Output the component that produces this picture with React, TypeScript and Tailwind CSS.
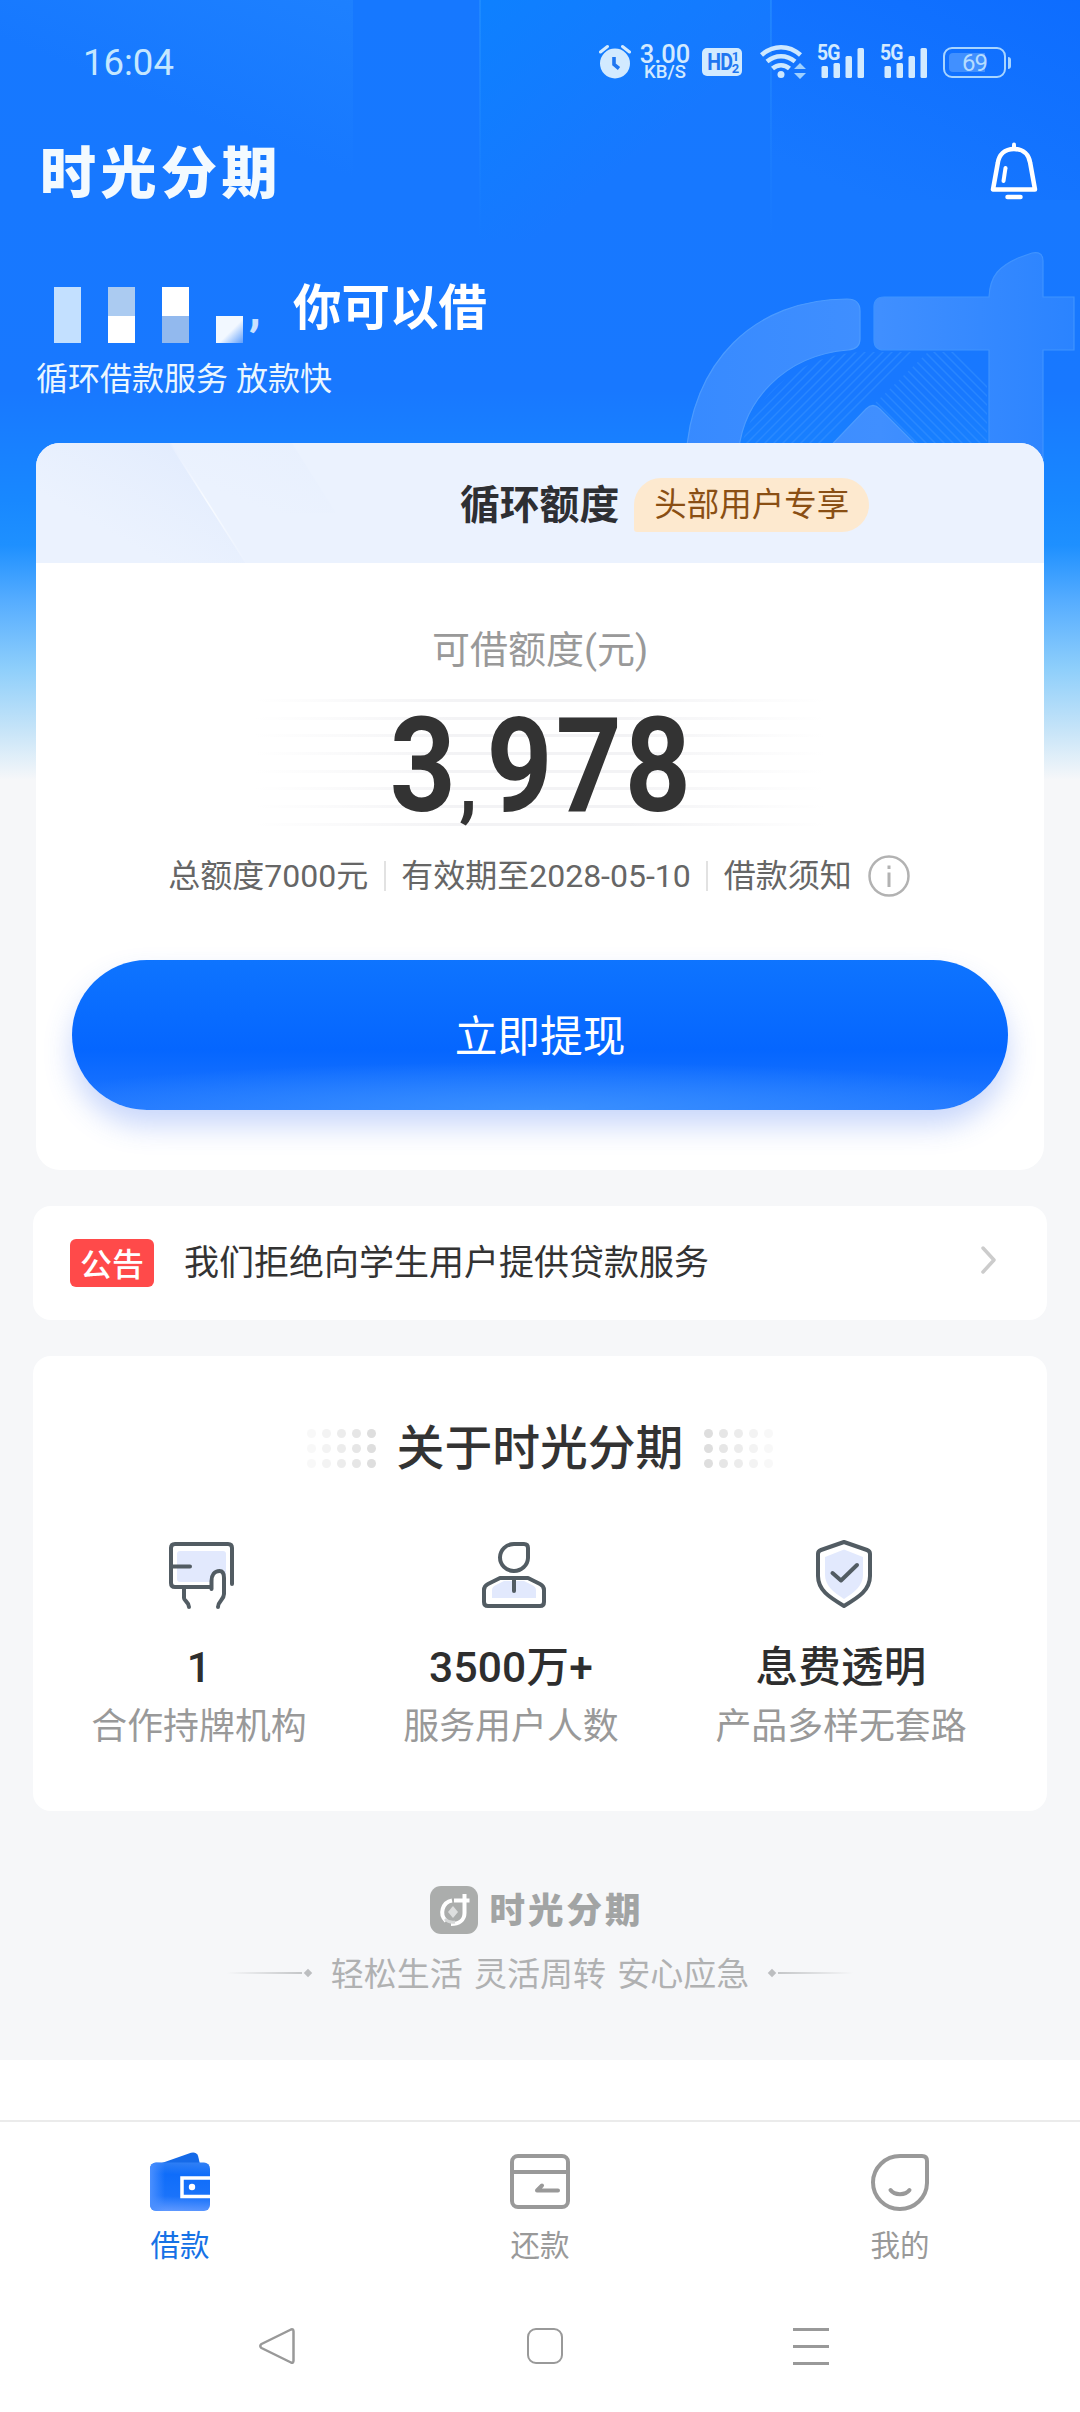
import React from 'react';

const DIGIT_STRIPES = [0, 1, 2, 3, 4, 5, 6, 7];
const DOT_OPACITY = [0.2, 0.35, 0.55, 0.75, 1];

function AlarmIcon() {
  return (
    <svg width="32" height="36" viewBox="0 0 32 36" fill="none">
      <circle cx="16" cy="19.5" r="15" fill="#d2eaff" />
      <path d="M1.500 8 8.500 2.500M30.500 8 23.500 2.500" stroke="#d2eaff" strokeWidth="3" strokeLinecap="round" />
      <path d="M15 13v7.500l5 4" stroke="#1f76f0" strokeWidth="3.600" />
    </svg>
  );
}

function WifiIcon() {
  return (
    <svg width="46" height="36" viewBox="0 0 46 36" fill="none">
      <g stroke="#cde8ff" strokeWidth="4.500">
        <path d="M1.500 11C13 .500 29 .500 40.500 11" />
        <path d="M7 17.500c8.500-7 19.500-7 28 0" />
        <path d="M12.500 24.500c5-4.500 12-4.500 17 0" />
      </g>
      <circle cx="21" cy="30.500" r="3.500" fill="#cde8ff" />
      <path d="M34 25h12l-6-6zM34 29h12l-6 6z" fill="#9fd0ff" />
    </svg>
  );
}

function Signal() {
  return (
    <div className="relative h-[34px] w-[47px]">
      <span className="absolute -top-px left-[-1px] origin-left scale-x-[0.9] font-['Roboto',sans-serif] text-[21.500px] leading-[18px] font-bold tracking-[-1px] text-[#d2eaff]">
        5G
      </span>
      <svg className="absolute inset-0" width="47" height="34" viewBox="0 0 47 34" fill="#d2eaff">
        <rect x="3.500" y="21" width="6.500" height="12" rx="1.500" />
        <rect x="15.500" y="18" width="6.500" height="15" rx="1.500" />
        <rect x="27.500" y="11" width="6.500" height="22" rx="1.500" />
        <rect x="39.500" y="3" width="6.500" height="30" rx="1.500" />
      </svg>
    </div>
  );
}

function StatusBar() {
  return (
    <div className="flex h-[124px] items-center pl-[83px]">
      <span className="w-[516px] pt-[2px] text-[36.500px] text-[#c4e7ff]">16:04</span>
      <div className="flex items-center">
        <AlarmIcon />
        <div className="ml-[8px] flex w-[52px] flex-col items-center pt-px font-medium text-[#d2eaff]">
          <span className="text-[25.500px] leading-[20px]">3.00</span>
          <span className="text-[18.500px] leading-[17px]">KB/S</span>
        </div>
        <div className="ml-[11px] flex h-[28px] w-[40px] items-center justify-center rounded-[5px] bg-[#d2eaff] pt-px text-[#1f76f0]">
          <span className="origin-center scale-x-[0.85] text-[23px] leading-[24px] font-bold tracking-[-1px]">HD</span>
          <span className="-ml-[2px] flex flex-col text-[13px] leading-[12px] font-bold">
            <span>1</span>
            <span>2</span>
          </span>
        </div>
        <div className="ml-[18px]">
          <WifiIcon />
        </div>
        <div className="ml-[12px] flex gap-4">
          <Signal />
          <Signal />
        </div>
        <div className="ml-[15px] flex items-center gap-[2px] pt-px">
          <div className="flex h-[31px] w-[63px] items-center rounded-[9px] border-[2.500px] border-[#a8d5ff] p-[4px]">
            <div className="flex h-full w-[36px] items-center justify-end rounded-l-[4px] bg-[#4190ff]">
              <span className="-mr-[2px] text-[24px] leading-none tracking-[-1px] text-[#b5dcff]">69</span>
            </div>
          </div>
          <div className="h-[12px] w-[3px] rounded-r bg-[#a8d5ff]" />
        </div>
      </div>
    </div>
  );
}

function BellIcon() {
  return (
    <svg width="48" height="58" viewBox="0 0 48 58" fill="none" stroke="#fff" strokeLinecap="round" strokeLinejoin="round">
      <path d="M24 2.500V6" strokeWidth="4" />
      <path d="M24 7C14.500 7 9 13 7.800 21L3 47.500h42L40.200 21C39 13 33.500 7 24 7Z" strokeWidth="4.500" />
      <path d="M15.500 26 13.500 39" strokeWidth="4" />
      <path d="M17.500 55h13" strokeWidth="4.500" />
    </svg>
  );
}

function HeroArt() {
  return (
    <svg className="absolute top-0 left-0" width="1080" height="470" viewBox="0 0 1080 470" fill="none">
      <defs>
        <linearGradient id="beam" x1="0" y1="0" x2="0" y2="1">
          <stop offset="0" stopColor="#38a0ff" stopOpacity="0.350" />
          <stop offset="1" stopColor="#38a0ff" stopOpacity="0" />
        </linearGradient>
        <linearGradient id="beamSide" x1="0.300" y1="1" x2="1" y2="0">
          <stop offset="0.400" stopColor="#2b90ff" stopOpacity="0" />
          <stop offset="1" stopColor="#2b90ff" stopOpacity="0.350" />
        </linearGradient>
        <linearGradient id="glow" x1="0" y1="0" x2="0.600" y2="0.600">
          <stop offset="0" stopColor="#0a84ff" stopOpacity="0.700" />
          <stop offset="1" stopColor="#0a84ff" stopOpacity="0" />
        </linearGradient>
        <linearGradient id="corner" x1="1" y1="0" x2="0.300" y2="1">
          <stop offset="0" stopColor="#0a68ff" stopOpacity="0.700" />
          <stop offset="1" stopColor="#0a68ff" stopOpacity="0" />
        </linearGradient>
        <linearGradient id="mark" x1="680" y1="0" x2="1080" y2="0" gradientUnits="userSpaceOnUse">
          <stop offset="0" stopColor="#378aff" />
          <stop offset="0.500" stopColor="#408fff" />
          <stop offset="1" stopColor="#2a83ff" />
        </linearGradient>
        <clipPath id="hatchLeft">
          <path d="M742 443C752 405 790 356 860 352H925L830 443Z" />
        </clipPath>
        <clipPath id="hatchRight">
          <path d="M874 404 928 352H987V443H914Z" />
        </clipPath>
      </defs>
      <rect x="0" y="0" width="353" height="200" fill="url(#beamSide)" />
      <rect x="480" y="0" width="291" height="240" fill="url(#glow)" />
      <rect x="771" y="0" width="309" height="200" fill="url(#corner)" />
      <rect x="479" y="0" width="2" height="240" fill="url(#beam)" />
      <rect x="770" y="0" width="2" height="240" fill="url(#beam)" />
      <g stroke="#3590ff" strokeWidth="1.500" opacity="0.600">
        <g clipPath="url(#hatchLeft)">
          {Array.from({ length: 15 }, (_, i) => (
            <path key={i} d={`M${690 + i * 9} 446l100-100`} />
          ))}
        </g>
        <g clipPath="url(#hatchRight)">
          {Array.from({ length: 15 }, (_, i) => (
            <path key={i} d={`M${820 + i * 9} 346l100 100`} />
          ))}
        </g>
      </g>
      <g fill="url(#mark)" stroke="#4c9bff" strokeWidth="1.200">
        <path d="M686 460C690 362 755 299 847 299q13 0 13 12v28q0 10-12 11C786 355 740 400 738 460Z" />
        <path
          d="M884 297H989C990 275 1000 266 1018 258l14-5q11-2 11 8v36h31v53h-31V470H989V350H884q-10 0-10-10V307q0-10 10-10Z"
          stroke="#3f93ff"
        />
        <path d="M820 457 866 409q7-7 14 0l48 48Z" />
      </g>
    </svg>
  );
}

function MaskedName() {
  return (
    <div className="mt-[5px] flex items-start gap-[27px] pl-[18px]">
      <div className="h-[56px] w-[27px] bg-[#c3e0ff]" />
      <div className="h-[56px] w-[27px] bg-white">
        <div className="h-[29px] bg-[#abcbf1]" />
      </div>
      <div className="h-[56px] w-[27px] bg-[#92b9ee]">
        <div className="h-[29px] bg-white" />
      </div>
      <div className="mt-[29px] h-[27px] w-[27px] bg-[linear-gradient(135deg,#f2f8ff_55%,#5d9dfb)]" />
    </div>
  );
}

function Hero() {
  return (
    <>
      <div className="flex h-[96px] items-center justify-between pr-[42px] pl-[40px]">
        <h1 className="pt-[3px] text-[56px] leading-none font-black tracking-[4.500px] text-[#f3faff]">时光分期</h1>
        <div className="-mt-[3px]">
          <BellIcon />
        </div>
      </div>
      <div className="flex h-[223px] flex-col pt-[56px] pl-[36px]">
        <div className="flex h-[72px] items-center">
          <MaskedName />
          <span className="relative top-[-3px] ml-[6px] w-[44px] text-[48px] leading-none font-bold text-[#c9e1ff]">,</span>
          <span className="relative top-[-3px] text-[48.500px] leading-none font-bold text-white">你可以借</span>
        </div>
        <p className="mt-[7px] text-[32px] leading-[48px] text-[#eaf6ff]">循环借款服务 放款快</p>
      </div>
    </>
  );
}

function QuotaCard() {
  return (
    <section className="relative mx-[36px] h-[727px] shrink-0 overflow-hidden rounded-[24px] bg-white">
      <div className="relative h-[120px] bg-[#ebf2fe]">
        <svg className="absolute top-0 left-0" width="330" height="120" viewBox="0 0 330 120">
          <defs>
            <linearGradient id="sheen" x1="0" y1="1" x2="1" y2="0">
              <stop offset="0.300" stopColor="#e0eafd" stopOpacity="0" />
              <stop offset="1" stopColor="#dce8fd" />
            </linearGradient>
            <linearGradient id="sheenEdge" x1="0" y1="0" x2="0" y2="1">
              <stop offset="0" stopColor="#e6eefe" />
              <stop offset="0.500" stopColor="#f8fbff" />
              <stop offset="1" stopColor="#ebf2fe" />
            </linearGradient>
          </defs>
          <path d="M0 0H134L210 120H0Z" fill="url(#sheen)" opacity="0.800" />
          <path d="M134 0H256L300 70H178Z" fill="url(#sheen)" opacity="0.250" />
          <path d="M134 0 210 120" stroke="url(#sheenEdge)" strokeWidth="1.500" />
        </svg>
        <div className="relative flex h-full items-center pt-[3px] pl-[424px]">
          <h2 className="pt-[2px] text-[39.800px] leading-none font-bold text-[#2e2f33]">循环额度</h2>
          <span className="ml-[15px] flex h-[54px] w-[235px] items-center justify-center rounded-[27px] rounded-bl-[3px] bg-[#fde9cf] pt-[2px] text-[32.500px] leading-none text-[#8a4f14]">
            头部用户专享
          </span>
        </div>
      </div>
      <div className="flex flex-col items-center">
        <p className="mt-[60px] text-[38px] leading-[54px] text-[#999]">可借额度(元)</p>
        <div className="relative mt-[19px] flex h-[132px] w-[570px] items-center justify-center">
          <div className="absolute inset-x-0 top-[3px] flex flex-col gap-[14.700px]">
            {DIGIT_STRIPES.map((i) => (
              <div key={i} className="h-[3px] bg-[linear-gradient(90deg,transparent,#f3f3f5_35%,#f3f3f5_65%,transparent)]" />
            ))}
          </div>
          <span className="relative top-[4px] left-[2px] scale-x-[0.88] font-['Roboto',sans-serif] text-[131px] leading-none font-bold tracking-[3.500px] whitespace-nowrap text-[#333]">
            3<span className="mr-[7px] text-[84px]">,</span>978
          </span>
        </div>
        <div className="mt-[22px] flex h-[52px] items-center pr-px text-[32px] text-[#666]">
          <span>总额度7000元</span>
          <i className="mx-[15.500px] h-[30px] w-[2px] bg-[#e2e2e2]" />
          <span>有效期至2028-05-10</span>
          <i className="mx-[15.500px] h-[30px] w-[2px] bg-[#e2e2e2]" />
          <span>借款须知</span>
          <svg className="ml-[15px]" width="44" height="44" viewBox="0 0 44 44" fill="none" stroke="#b2b2b2">
            <circle cx="22" cy="22" r="19.500" strokeWidth="2.500" />
            <path d="M22 18.500V33M22 11.500v3.500" strokeWidth="3" />
          </svg>
        </div>
        <button className="mt-[58px] h-[150px] w-[936px] rounded-[75px] bg-[radial-gradient(60%_32%_at_50%_100%,#3a90ff,transparent),linear-gradient(180deg,#0e74ff,#0566ff_60%,#2076ff)] pt-[4px] text-[42.700px] text-white shadow-[0_16px_28px_rgba(60,110,240,0.280)]">
          立即提现
        </button>
      </div>
    </section>
  );
}

function NoticeBar() {
  return (
    <section className="mx-[33px] mt-[36px] flex h-[114px] shrink-0 items-center rounded-[18px] bg-white pr-[50px] pl-[37px]">
      <span className="flex h-[48px] w-[84px] items-center justify-center rounded-[6px] bg-[#ff4a4a] pt-[3px] text-[32px] leading-none font-medium text-white">
        公告
      </span>
      <span className="ml-[30px] grow text-[35px] leading-none text-[#333]">我们拒绝向学生用户提供贷款服务</span>
      <svg className="-mt-[6px]" width="16" height="28" viewBox="0 0 16 28" fill="none">
        <path d="M2 2 13 14 2 26" stroke="#ccc" strokeWidth="3.500" strokeLinecap="round" strokeLinejoin="round" />
      </svg>
    </section>
  );
}

function DotGrid({ flip = false }: { flip?: boolean }) {
  const cols = flip ? [...DOT_OPACITY].reverse() : DOT_OPACITY;
  return (
    <div className="flex gap-[6px]">
      {cols.map((opacity) => (
        <div key={opacity} className="flex flex-col gap-[6px]" style={{ opacity }}>
          <i className="size-[9px] rounded-full bg-[#dedede]" />
          <i className="size-[9px] rounded-full bg-[#dedede]" />
          <i className="size-[9px] rounded-full bg-[#dedede]" />
        </div>
      ))}
    </div>
  );
}

function LicenseIcon() {
  return (
    <svg width="68" height="70" viewBox="0 0 68 70" fill="none" stroke="#525c63" strokeWidth="4" strokeLinecap="round" strokeLinejoin="round">
      <rect x="9" y="11" width="49" height="31" rx="3" fill="#e2e9fd" stroke="none" />
      <path d="M43.500 48c0-8 1-15 6-17 5 0 6.500 3 6.500 8v17l-13 6Z" fill="#fff" stroke="none" />
      <path d="M43 47H7q-4 0-4-4V8q0-4 4-4H60q4 0 4 4V44M4 26.500H22" />
      <path d="M16 48v10c0 3 5 4 5 9M43.500 49V41c0-6 3-10 8-10 3 0 4.500 3 4.500 7V54c0 6-6 7-6 13" />
    </svg>
  );
}

function UserIcon() {
  return (
    <svg width="68" height="70" viewBox="0 0 68 70" fill="none" stroke="#525c63" strokeWidth="4" strokeLinecap="round" strokeLinejoin="round">
      <path d="M12 58V50q0-3 4-5l8-4H44l8 4q4 2 4 5v8Z" fill="#e2e9fd" stroke="none" />
      <path d="M34 4H44q4 0 4 4V18a14 13.500 0 1 1-14-14Z" />
      <path d="M20 38H48L60 44q4 2 4 6V62q0 4-4 4H8q-4 0-4-4V50q0-4 4-6ZM34 39V51" />
    </svg>
  );
}

function ShieldIcon() {
  return (
    <svg width="60" height="70" viewBox="0 0 60 70" fill="none" stroke="#525c63" strokeWidth="4" strokeLinecap="round" strokeLinejoin="round">
      <path d="M30 9.500 49 17V35c0 10-8 17-19 24C19 52 11 45 11 35V17Z" fill="#e2e9fd" stroke="none" />
      <path d="M30 2 53 10q3 1 3 4V36c0 14-11 21-26 30C15 57 4 50 4 36V14q0-3 3-4Z" />
      <path d="M18.500 33 27 40.500 43 25" />
    </svg>
  );
}

const FEATURES = [
  { icon: <LicenseIcon />, value: '1', label: '合作持牌机构', width: 'w-[216px]' },
  { icon: <UserIcon />, value: '3500万+', label: '服务用户人数', width: 'w-[216px]' },
  { icon: <ShieldIcon />, value: '息费透明', label: '产品多样无套路', width: 'w-[252px]' },
];

function AboutCard() {
  return (
    <section className="mx-[33px] mt-[36px] h-[455px] shrink-0 rounded-[18px] bg-white pt-[57px]">
      <div className="flex h-[70px] items-center justify-center gap-[21px]">
        <DotGrid />
        <h2 className="pt-[3px] text-[47.800px] leading-none font-medium text-[#333]">关于时光分期</h2>
        <DotGrid flip />
      </div>
      <div className="flex gap-[96px] pt-[57px] pl-[58px]">
        {FEATURES.map((f) => (
          <div key={f.label} className={`flex shrink-0 flex-col items-center ${f.width}`}>
            <div className="h-[70px] pl-[5px]">{f.icon}</div>
            <p className="mt-[28px] text-[42.500px] leading-[60px] font-medium tracking-[0.200px] text-[#2e2e2e]">{f.value}</p>
            <p className="mt-[3px] text-[35.900px] leading-[52px] whitespace-nowrap text-[#999]">{f.label}</p>
          </div>
        ))}
      </div>
    </section>
  );
}

function FooterBrand() {
  return (
    <footer className="flex flex-col items-center pt-[72px]">
      <div className="flex h-[54px] items-center gap-[11px] pr-[6px]">
        <svg width="48" height="48" viewBox="0 0 48 48" fill="none">
          <rect width="48" height="48" rx="11" fill="#abadac" />
          <path d="M22 14.500A12 12 0 0 0 16 35" stroke="#fff" strokeWidth="4" />
          <path d="M24 14.500H39.500M34.500 8V27C34.500 34 29 38 21 38" stroke="#fff" strokeWidth="4" />
          <path d="M15 33q4 4 10 3" stroke="#d6d8d8" strokeWidth="3" />
          <path d="M23 20l5 6-5 6-5-6Z" fill="#dddede" />
        </svg>
        <span className="pt-[3px] text-[35.500px] leading-none font-black tracking-[3px] text-[#a2a4a4]">时光分期</span>
      </div>
      <div className="mt-[12px] flex h-[48px] items-center">
        <i className="h-[2px] w-[75px] bg-[linear-gradient(90deg,transparent,#c4c6c8)]" />
        <i className="ml-[3px] size-[6px] rotate-45 bg-[#bcbec0]" />
        <p className="mx-[20px] pt-[3px] text-[33px] leading-none [word-spacing:3px] whitespace-nowrap text-[#b0b1b2]">
          轻松生活 灵活周转 安心应急
        </p>
        <i className="mr-[3px] size-[6px] rotate-45 bg-[#bcbec0]" />
        <i className="h-[2px] w-[75px] bg-[linear-gradient(270deg,transparent,#c4c6c8)]" />
      </div>
    </footer>
  );
}

function WalletIcon() {
  return (
    <svg width="60" height="60" viewBox="0 0 60 60" fill="none">
      <defs>
        <linearGradient id="wallet" x1="0.500" y1="0" x2="0.450" y2="1">
          <stop offset="0" stopColor="#2f7ff5" />
          <stop offset="0.250" stopColor="#0f6dfa" />
          <stop offset="0.700" stopColor="#1a73fa" />
          <stop offset="1" stopColor="#5e98ff" />
        </linearGradient>
        <linearGradient id="walletEdge" x1="0" y1="0" x2="1" y2="0">
          <stop offset="0" stopColor="#4a8fff" />
          <stop offset="0.250" stopColor="#4a8fff" stopOpacity="0" />
        </linearGradient>
      </defs>
      <path d="M9 12 41 .800q5-1.300 7 3L50 12Z" fill="#156ae8" />
      <rect y="10.500" width="60" height="48.500" rx="6" fill="url(#wallet)" />
      <rect y="10.500" width="60" height="48.500" rx="6" fill="url(#walletEdge)" />
      <path d="M60 26H32V44.500H60" stroke="#fff" strokeWidth="3.500" />
      <circle cx="42" cy="35" r="3.200" fill="#fff" />
    </svg>
  );
}

function RepayIcon() {
  return (
    <svg width="60" height="60" viewBox="0 0 60 60" fill="none" stroke="#999" strokeWidth="4" strokeLinecap="round" strokeLinejoin="round">
      <rect x="2" y="4" width="56" height="51" rx="6" />
      <path d="M2 20H58" strokeLinecap="butt" />
      <path d="M48 38.500H27L32 33.500" />
    </svg>
  );
}

function FaceIcon() {
  return (
    <svg width="60" height="60" viewBox="0 0 60 60" fill="none" stroke="#999" strokeWidth="4" strokeLinecap="round" strokeLinejoin="round">
      <path d="M30 4H52q5 0 5 5V31A27 26.500 0 1 1 30 4Z" />
      <path d="M20.500 38c4 5.500 15 5.500 19 0" />
    </svg>
  );
}

const TABS = [
  { icon: <WalletIcon />, label: '借款', color: 'text-[#1672e6]' },
  { icon: <RepayIcon />, label: '还款', color: 'text-[#999]' },
  { icon: <FaceIcon />, label: '我的', color: 'text-[#999]' },
];

function TabBar() {
  return (
    <nav className="grid h-[164px] grid-cols-3 border-t-2 border-[#ebebeb] pt-[30px]">
      {TABS.map((tab) => (
        <div key={tab.label} className="flex flex-col items-center">
          {tab.icon}
          <span className={`mt-[12px] text-[29.500px] leading-[44px] ${tab.color}`}>{tab.label}</span>
        </div>
      ))}
    </nav>
  );
}

function SystemNav() {
  return (
    <div className="flex h-[124px] items-center pl-[258px]">
      <svg width="38" height="38" viewBox="0 0 38 38" fill="none" stroke="#999" strokeWidth="2.500" strokeLinejoin="round">
        <path d="M33 2.500Q35.500 1.500 35.500 4.500V33.500Q35.500 36.500 33 35.500L3.500 21Q1 19 3.500 17Z" />
      </svg>
      <div className="ml-[231px] size-[36px] rounded-[9px] border-[2.500px] border-[#999]" />
      <div className="ml-[230px] flex h-[37px] w-[36px] flex-col justify-between">
        <i className="h-[3px] bg-[#999]" />
        <i className="h-[3px] bg-[#999]" />
        <i className="h-[3px] bg-[#999]" />
      </div>
    </div>
  );
}

export default function App() {
  return (
    <div className="relative h-[2412px] w-[1080px] overflow-hidden bg-white font-['Roboto','Noto_Sans_CJK_SC',sans-serif]">
      <main className="relative flex h-[2060px] flex-col bg-[linear-gradient(180deg,#1678ff_0px,#1878ff_390px,#1888ff_500px,#1e90ff_545px,#55acff_600px,#8fcffb_670px,#c6e4f8_730px,#f6f7f9_780px)]">
        <HeroArt />
        <div className="relative">
          <StatusBar />
          <Hero />
        </div>
        <QuotaCard />
        <NoticeBar />
        <AboutCard />
        <FooterBrand />
      </main>
      <div className="h-[60px]" />
      <TabBar />
      <SystemNav />
    </div>
  );
}
